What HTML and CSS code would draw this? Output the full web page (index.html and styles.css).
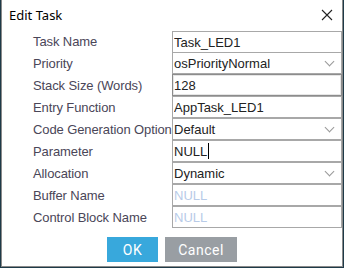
FILE: index.html
```html
<!DOCTYPE html>
<html lang="en">
<head>
    <meta charset="UTF-8">
    <title>Edit Task</title>
    <link rel="stylesheet" href="styles.css">
</head>
<body>
    <div class="dialog">
        <!-- Title bar -->
        <div class="titlebar">
            <span class="title">Edit Task</span>
            <svg class="close" width="12" height="12" viewBox="0 0 12 12">
                <path d="M1 1L11 11M11 1L1 11" stroke="#222" stroke-width="1.1" fill="none"/>
            </svg>
        </div>

        <!-- Task form -->
        <div class="form">
            <label>Task Name</label>
            <div class="field"><input type="text" value="Task_LED1"></div>

            <label>Priority</label>
            <div class="field select"><span>osPriorityNormal</span><i class="chev"></i></div>

            <label>Stack Size (Words)</label>
            <div class="field inset"><input type="text" value="128"></div>

            <label>Entry Function</label>
            <div class="field"><input type="text" value="AppTask_LED1"></div>

            <label>Code Generation Option</label>
            <div class="field select"><span>Default</span><i class="chev"></i></div>

            <label>Parameter</label>
            <div class="field"><span>NULL<b class="caret"></b></span></div>

            <label>Allocation</label>
            <div class="field select"><span>Dynamic</span><i class="chev"></i></div>

            <label>Buffer Name</label>
            <div class="field"><input type="text" placeholder="NULL"></div>

            <label>Control Block Name</label>
            <div class="field"><input type="text" placeholder="NULL"></div>
        </div>

        <!-- Buttons -->
        <div class="buttons">
            <button class="ok">OK</button>
            <button class="cancel">Cancel</button>
        </div>
    </div>
</body>
</html>
```

FILE: styles.css
```css
body {
    margin: 0;
    background-color: #1e3a48;
    font-family: "Liberation Sans", Arial, sans-serif;
}

.dialog {
    box-sizing: border-box;
    width: 342px;
    height: 267px;
    margin-left: 1px;
    background: #fff;
    border: 1px solid #8a8a8a;
    border-top: none;
}

.titlebar {
    display: flex;
    justify-content: space-between;
    align-items: center;
    height: 30px;
    padding: 0 9px 0 7px;
}

.title {
    font-family: "Noto Sans", sans-serif;
    font-size: 13px;
    color: #000;
}

.form {
    display: grid;
    grid-template-columns: 139px 170px;
    grid-auto-rows: 22px;
    padding-left: 31px;
    margin-top: 1px;
}

.form label {
    position: relative;
    z-index: 1;
    font-size: 13px;
    color: #4a4658;
    line-height: 22px;
    white-space: nowrap;
    letter-spacing: -0.1px;
}

.field {
    display: flex;
    align-items: center;
    box-sizing: border-box;
    height: 22px;
    margin-top: -1px;
    border: 1px solid #a8a8a8;
    font-size: 13px;
    color: #222;
    padding-left: 1px;
}

.form .field:first-of-type {
    margin-top: 0;
}

.field input {
    border: none;
    outline: none;
    padding: 0;
    width: 100%;
    font-family: "Liberation Sans", Arial, sans-serif;
    font-size: 13px;
    color: #222;
    background: transparent;
}

.field input::placeholder {
    color: #b8cbe8;
}

.field.inset {
    border-color: #8c8c8c;
    box-shadow: inset 0 0 0 1px #e6e6e6;
}

.field.select {
    justify-content: space-between;
    padding-right: 8px;
}

.chev {
    width: 6px;
    height: 6px;
    border-right: 1px solid #999;
    border-bottom: 1px solid #999;
    transform: rotate(45deg);
    margin-top: -4px;
}

.caret {
    display: inline-block;
    width: 1px;
    height: 16px;
    background: #000;
    vertical-align: -3px;
    margin-left: 1px;
}

.buttons {
    display: flex;
    gap: 7px;
    padding-left: 105px;
    margin-top: 8px;
}

.buttons button {
    height: 25px;
    border: none;
    color: #fff;
    font-family: Roboto, sans-serif;
    font-size: 14px;
    letter-spacing: 0.5px;
    cursor: pointer;
}

.ok {
    width: 51px;
    background-color: #38a8dc;
}

.cancel {
    width: 72px;
    background-color: #999ea3;
}
```
